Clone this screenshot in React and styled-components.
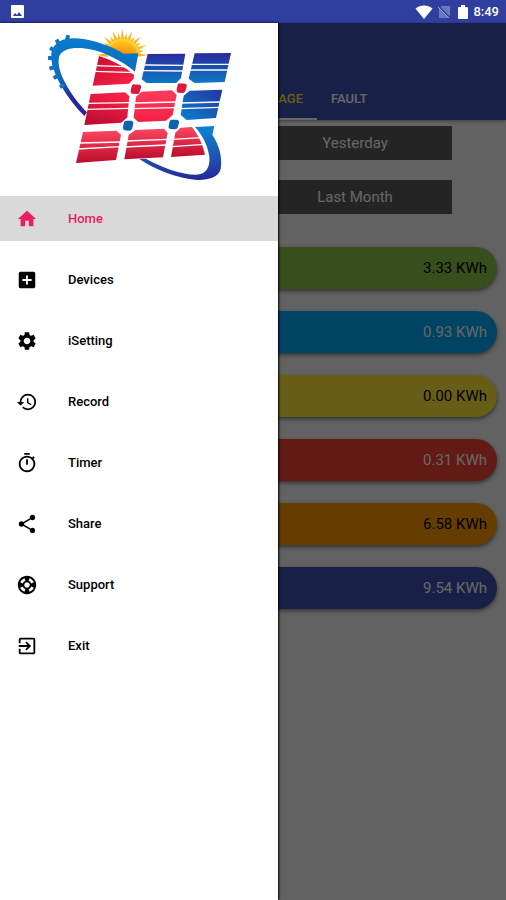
import styled, { createGlobalStyle } from "styled-components";
import {
  MdHome,
  MdAddBox,
  MdSettings,
  MdHistory,
  MdOutlineTimer,
  MdShare,
  MdOutlineSupport,
  MdExitToApp,
} from "react-icons/md";

const GlobalStyle = createGlobalStyle`
  * {
    box-sizing: border-box;
  }
  body {
    margin: 0;
    background: #f5f5f5;
    font-family: Roboto, "Liberation Sans", sans-serif;
  }
`;

const Page = styled.div`
  display: flex;
  flex-direction: column;
  min-height: 100vh;
`;

const StatusBar = styled.header`
  display: flex;
  align-items: center;
  justify-content: space-between;
  height: 23px;
  padding: 0 7px 0 10px;
  background: #303f9f;
  color: #fff;
`;

const StatusIcons = styled.div`
  display: flex;
  align-items: center;
  gap: 4px;
`;

const Clock = styled.time`
  font-size: 13px;
  line-height: 16px;
  font-weight: 500;
`;

const Screen = styled.div`
  position: relative;
  flex: 1;
  display: flex;
  flex-direction: column;
`;

const AppBar = styled.div`
  display: flex;
  align-items: flex-end;
  height: 97px;
  background: #3f51b5;
  box-shadow: 0 1px 3px rgba(0, 0, 0, 0.4);
`;

const Tabs = styled.nav`
  display: flex;
  margin-left: 49%;
`;

const Tab = styled.button`
  height: 42px;
  padding: 0 14px;
  border: 0;
  border-bottom: 2px solid ${(p) => (p.$active ? "#fff" : "transparent")};
  background: none;
  color: ${(p) => (p.$active ? "#ffeb3b" : "#fff")};
  font-family: inherit;
  font-size: 13px;
  font-weight: 500;
`;

const Periods = styled.div`
  display: grid;
  grid-template-columns: 1fr 1fr;
  gap: 20px 10px;
  padding: 6px 54px 0;
`;

const PeriodButton = styled.button`
  height: 34px;
  border: 0;
  border-radius: 1px;
  background: #5a5a5a;
  color: #fff;
  font-family: inherit;
  font-size: 15px;
`;

const Readings = styled.ul`
  display: flex;
  flex-direction: column;
  gap: 22px;
  margin: 0;
  padding: 33px 9px;
  list-style: none;
`;

const Reading = styled.li`
  display: flex;
  align-items: center;
  justify-content: flex-end;
  height: 42px;
  padding: 0 10px;
  border-radius: 21px;
  background: ${(p) => p.$color};
  color: ${(p) => (p.$dark ? "#000" : "#fff")};
  box-shadow: 0 2px 4px rgba(0, 0, 0, 0.5);
  font-size: 15px;
`;

const Scrim = styled.div`
  position: absolute;
  inset: 0;
  background: rgba(0, 0, 0, 0.6);
`;

const Drawer = styled.aside`
  position: absolute;
  top: 0;
  bottom: 0;
  left: 0;
  width: 55%;
  background: #fff;
  box-shadow: 1px 0 2px #000;
`;

const DrawerHeader = styled.div`
  display: flex;
  justify-content: center;
  height: 173px;
  padding-top: 4px;
`;

const Menu = styled.nav`
  display: flex;
  flex-direction: column;
  gap: 16px;
`;

const MenuItem = styled.a`
  display: flex;
  align-items: center;
  gap: 30px;
  height: 45px;
  padding-left: 16px;
  background: ${(p) => (p.$active ? "#d9d9d9" : "transparent")};
  color: ${(p) => (p.$active ? "#e91e63" : "#000")};
  font-size: 13px;
  font-weight: 500;
  text-decoration: none;
  svg {
    width: 22px;
    height: 22px;
  }
`;

const menu = [
  { label: "Home", icon: MdHome, active: true },
  { label: "Devices", icon: MdAddBox },
  { label: "iSetting", icon: MdSettings },
  { label: "Record", icon: MdHistory },
  { label: "Timer", icon: MdOutlineTimer },
  { label: "Share", icon: MdShare },
  { label: "Support", icon: MdOutlineSupport },
  { label: "Exit", icon: MdExitToApp },
];

const readings = [
  { value: "3.33 KWh", color: "#8bc34a", dark: true },
  { value: "0.93 KWh", color: "#03a9f4" },
  { value: "0.00 KWh", color: "#ffeb3b", dark: true },
  { value: "0.31 KWh", color: "#f44336" },
  { value: "6.58 KWh", color: "#ff9800", dark: true },
  { value: "9.54 KWh", color: "#3f51b5" },
];

const sunRays = Array.from({ length: 17 }, (_, i) => {
  const a = Math.PI + (i * Math.PI) / 16;
  const r = i % 2 ? 66 : 78;
  const point = (angle, radius) =>
    `${367 + Math.cos(angle) * radius},${165 + Math.sin(angle) * radius}`;
  return [point(a - 0.14, 44), point(a, r), point(a + 0.14, 44)].join(" ");
});

const gearTeeth = [
  [203, 112, 15],
  [173, 125, -30],
  [156, 147, -58],
  [151, 174, -88],
  [155, 204, -105],
  [167, 231, -115],
  [186, 258, -120],
];

function Logo() {
  return (
    <svg width="188" height="155" viewBox="135 81 564 465" role="img" aria-label="Solar">
      <defs>
        <linearGradient id="red" x1="0" y1="0" x2="1" y2="1">
          <stop offset="0" stopColor="#c40f32" />
          <stop offset="1" stopColor="#fb2348" />
        </linearGradient>
        <linearGradient id="redMid" x1="0" y1="0" x2="0" y2="1">
          <stop offset="0" stopColor="#fc3d5b" />
          <stop offset="1" stopColor="#f41f45" />
        </linearGradient>
        <linearGradient id="redLow" x1="0" y1="0" x2="0" y2="1">
          <stop offset="0" stopColor="#fb4660" />
          <stop offset="1" stopColor="#bd0c2d" />
        </linearGradient>
        <linearGradient id="redLeft" x1="0.8" y1="0" x2="0.3" y2="1">
          <stop offset="0" stopColor="#fb2348" />
          <stop offset="1" stopColor="#bf0c30" />
        </linearGradient>
        <linearGradient id="blue" x1="0" y1="0" x2="0" y2="1">
          <stop offset="0" stopColor="#2b2a9c" />
          <stop offset="1" stopColor="#0b78c6" />
        </linearGradient>
        <linearGradient id="blueSide" x1="0" y1="1" x2="1" y2="0">
          <stop offset="0" stopColor="#0882d0" />
          <stop offset="1" stopColor="#26339f" />
        </linearGradient>
        <linearGradient id="arcTop" x1="0.3" y1="0" x2="0.3" y2="1">
          <stop offset="0" stopColor="#087acb" />
          <stop offset="0.5" stopColor="#0d6cc0" />
          <stop offset="0.75" stopColor="#252b9c" />
          <stop offset="1" stopColor="#2b249b" />
        </linearGradient>
        <linearGradient id="arcBottom" x1="0" y1="0" x2="0" y2="1">
          <stop offset="0" stopColor="#0a86d2" />
          <stop offset="0.6" stopColor="#2151b0" />
          <stop offset="1" stopColor="#24289b" />
        </linearGradient>
        <radialGradient id="sun" cx="0.5" cy="1" r="1">
          <stop offset="0" stopColor="#f88b0c" />
          <stop offset="0.6" stopColor="#fcae17" />
          <stop offset="1" stopColor="#ffc91f" />
        </radialGradient>
      </defs>

      <g fill="#fdb71c">
        {sunRays.map((points) => (
          <polygon key={points} points={points} />
        ))}
      </g>
      <path d="M315 165A52 48 0 0 1 419 162Z" fill="#ffd230" />
      <path d="M323 165A44 41 0 0 1 411 162Z" fill="url(#sun)" />

      <path
        d="M253 348C205 300 148 215 154 160C164 110 220 108 282 124C318 134 346 146 371 161L415 160L405 215C370 184 314 157 277 149C232 140 188 142 177 170C167 216 215 289 261 337Z"
        fill="url(#arcTop)"
      />
      <g fill="#0b76c8">
        {gearTeeth.map(([x, y, turn]) => (
          <rect
            key={y}
            x={x - 6}
            y={y - 7}
            width="12"
            height="15"
            rx="2"
            transform={`rotate(${turn} ${x} ${y})`}
          />
        ))}
      </g>
      <path
        d="M418 477L438 476C480 499 540 524 588 524C620 523 631 499 628 470C623 434 606 404 585 381L643 378L637 404C659 438 668 474 662 508C655 532 625 541 591 540C532 535 467 510 418 477Z"
        fill="url(#arcBottom)"
      />

      <path d="M297 168C337 181 375 200 402 225L401 236L387 251L278 257Z" fill="url(#red)" />
      <path d="M443 162L556 161L543 234L529 249L440 249L425 238Z" fill="url(#blue)" />
      <path d="M584 160L693 159L674 246L584 249L566 236Z" fill="url(#blue)" />
      <path d="M272 282L375 277L388 289L382 352L364 368L253 375Z" fill="url(#redLeft)" />
      <path d="M425 275L516 271L530 284L518 345L498 362L415 366L401 353L408 290Z" fill="url(#redMid)" />
      <path d="M569 272L667 269L648 354L560 360L542 345L551 287Z" fill="url(#blueSide)" />
      <path d="M249 396L350 392L363 405L348 480L228 489Z" fill="url(#redLow)" />
      <path d="M406 390L492 386L503 399L489 472L373 478L386 405Z" fill="url(#redLow)" />
      <path d="M542 383L576 381C596 407 608 434 615 464L513 471L526 398Z" fill="url(#redLow)" />

      <g fill="none" stroke="#fff" strokeWidth="4">
        <path d="M286 197L372 200M284 214L405 218" />
        <path d="M432 195L551 196M429 212L548 213" />
        <path d="M573 193L688 193M570 210L684 210" />
        <path d="M262 310L388 308M258 328L386 325" />
        <path d="M402 309L528 306M398 326L525 323" />
        <path d="M544 309L662 306M541 326L658 322" />
        <path d="M237 429L363 426M233 447L360 440" />
        <path d="M377 423L503 418M373 441L499 435" />
        <path d="M518 418L604 413M515 440L613 433" />
      </g>

      <path d="M400 253L420 254Q425 257 423 264L418 278Q416 282 411 282L396 281Q390 278 392 271L395 259Q397 254 400 253Z" fill="#d71c3e" />
      <path d="M538 250L556 251Q562 253 560 260L556 274Q554 278 549 279L534 278Q528 275 530 268L533 255Q534 251 538 250Z" fill="#d71c3e" />
      <path d="M377 362L395 362Q402 365 400 371L396 387Q394 391 389 392L374 391Q367 388 369 381L372 367Q374 363 377 362Z" fill="#1260b0" />
      <path d="M514 359L532 359Q539 362 537 368L533 383Q531 387 526 388L511 387Q504 384 506 377L509 364Q511 360 514 359Z" fill="#1260b0" />
    </svg>
  );
}

function PictureIcon() {
  return (
    <svg width="14" height="14" viewBox="0 0 14 14">
      <rect x="1" width="13" height="13" rx="1" fill="#fff" />
      <path d="M3 11L5 8l2 2L9 7l3 4Z" fill="#303f9f" />
    </svg>
  );
}

function WifiIcon() {
  return (
    <svg width="18" height="14" viewBox="0 0 18 14">
      <path d="M9 14L0.500 3.500C5 -0.500 13 -0.500 17.500 3.500Z" fill="#fff" />
    </svg>
  );
}

function NoSimIcon() {
  return (
    <svg width="16" height="14" viewBox="2 0 16 14">
      <path d="M7 1h8v12H4V4Z" fill="#fff" opacity="0.3" />
      <path d="M3 1L15 13" stroke="#303f9f" strokeWidth="2" />
      <path d="M3 2L14 13" stroke="#fff" strokeWidth="1" opacity="0.5" />
    </svg>
  );
}

function BatteryIcon() {
  return (
    <svg width="12" height="14" viewBox="0 0 12 14">
      <path d="M4 0h4v2h2a1 1 0 0 1 1 1v10a1 1 0 0 1-1 1H2a1 1 0 0 1-1-1V3a1 1 0 0 1 1-1h2Z" fill="#fff" />
    </svg>
  );
}

export default function App() {
  return (
    <Page>
      <GlobalStyle />
      <StatusBar>
        <PictureIcon />
        <StatusIcons>
          <WifiIcon />
          <NoSimIcon />
          <BatteryIcon />
          <Clock>8:49</Clock>
        </StatusIcons>
      </StatusBar>
      <Screen>
        <AppBar>
          <Tabs>
            <Tab $active>USAGE</Tab>
            <Tab>FAULT</Tab>
          </Tabs>
        </AppBar>
        <Periods>
          <PeriodButton>Today</PeriodButton>
          <PeriodButton>Yesterday</PeriodButton>
          <PeriodButton>This Month</PeriodButton>
          <PeriodButton>Last Month</PeriodButton>
        </Periods>
        <Readings>
          {readings.map((r) => (
            <Reading key={r.value} $color={r.color} $dark={r.dark}>
              {r.value}
            </Reading>
          ))}
        </Readings>
        <Scrim />
        <Drawer>
          <DrawerHeader>
            <Logo />
          </DrawerHeader>
          <Menu>
            {menu.map(({ label, icon: Icon, active }) => (
              <MenuItem key={label} href="#" $active={active}>
                <Icon />
                {label}
              </MenuItem>
            ))}
          </Menu>
        </Drawer>
      </Screen>
    </Page>
  );
}
